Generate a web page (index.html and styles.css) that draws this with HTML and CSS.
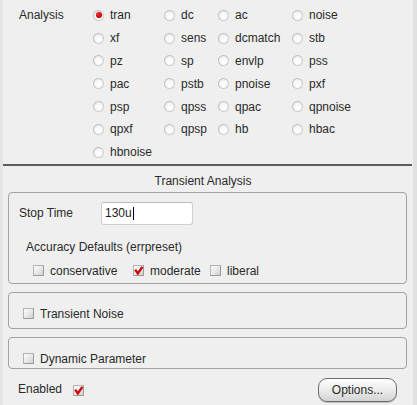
FILE: index.html
```html
<!DOCTYPE html>
<html>
<head>
<meta charset="utf-8">
<title>Analysis</title>
<link rel="stylesheet" href="styles.css">
</head>
<body>
<div class="app">
  <div class="content">
    <section class="analysis">
      <div class="analysis-label">Analysis</div>
      <div class="radio-grid">
        <div class="radio"><span class="radio-btn on"><span class="radio-dot"></span></span>tran</div>
        <div class="radio"><span class="radio-btn"></span>dc</div>
        <div class="radio"><span class="radio-btn"></span>ac</div>
        <div class="radio"><span class="radio-btn"></span>noise</div>
        <div class="radio"><span class="radio-btn"></span>xf</div>
        <div class="radio"><span class="radio-btn"></span>sens</div>
        <div class="radio"><span class="radio-btn"></span>dcmatch</div>
        <div class="radio"><span class="radio-btn"></span>stb</div>
        <div class="radio"><span class="radio-btn"></span>pz</div>
        <div class="radio"><span class="radio-btn"></span>sp</div>
        <div class="radio"><span class="radio-btn"></span>envlp</div>
        <div class="radio"><span class="radio-btn"></span>pss</div>
        <div class="radio"><span class="radio-btn"></span>pac</div>
        <div class="radio"><span class="radio-btn"></span>pstb</div>
        <div class="radio"><span class="radio-btn"></span>pnoise</div>
        <div class="radio"><span class="radio-btn"></span>pxf</div>
        <div class="radio"><span class="radio-btn"></span>psp</div>
        <div class="radio"><span class="radio-btn"></span>qpss</div>
        <div class="radio"><span class="radio-btn"></span>qpac</div>
        <div class="radio"><span class="radio-btn"></span>qpnoise</div>
        <div class="radio"><span class="radio-btn"></span>qpxf</div>
        <div class="radio"><span class="radio-btn"></span>qpsp</div>
        <div class="radio"><span class="radio-btn"></span>hb</div>
        <div class="radio"><span class="radio-btn"></span>hbac</div>
        <div class="radio"><span class="radio-btn"></span>hbnoise</div>
      </div>
    </section>

    <div class="separator"></div>

    <div class="section-title">Transient Analysis</div>

    <div class="group group-main">
      <div class="field-row">
        <span class="field-label">Stop Time</span>
        <div class="text-input">130u<span class="caret"></span></div>
      </div>
      <div class="sub-label">Accuracy Defaults (errpreset)</div>
      <div class="check-row">
        <div class="check item-cons"><span class="check-box"></span>conservative</div>
        <div class="check item-mod"><span class="check-box"><svg viewBox="0 0 11 11" width="11" height="11"><path d="M2.2 4.6 L4.8 8.4 L9.4 1.8" fill="none" stroke="#d20000" stroke-width="2.3" stroke-linejoin="miter"/></svg></span>moderate</div>
        <div class="check"><span class="check-box"></span>liberal</div>
      </div>
    </div>

    <div class="group group-noise">
      <div class="check"><span class="check-box"></span>Transient Noise</div>
    </div>

    <div class="group group-dyn">
      <div class="check"><span class="check-box"></span>Dynamic Parameter</div>
    </div>

    <div class="footer">
      <span class="enabled-label">Enabled</span>
      <span class="check-box bare"><svg viewBox="0 0 11 11" width="11" height="11"><path d="M2.2 4.6 L4.8 8.4 L9.4 1.8" fill="none" stroke="#d20000" stroke-width="2.3" stroke-linejoin="miter"/></svg></span>
      <span class="spacer"></span>
      <button class="btn" type="button">Options...</button>
    </div>
  </div>
</div>
</body>
</html>
```

FILE: styles.css
```css
* {
  box-sizing: border-box;
}

html,
body {
  margin: 0;
  padding: 0;
}

body {
  width: 417px;
  height: 405px;
  overflow: hidden;
  background: #efefef;
  font-family: "Liberation Sans", Arial, sans-serif;
  font-size: 12px;
  color: #2a2a2a;
}

.app {
  display: flex;
  height: 405px;
  border-left: 3px solid #e5e5e5;
  border-right: 4px solid #e1e1e1;
}

.content {
  flex: 1;
  margin-right: 1px;
  display: flex;
  flex-direction: column;
}

/* Analysis radio section */
.analysis {
  display: flex;
  padding-top: 4px;
}

.analysis-label {
  width: 90px;
  padding-left: 16px;
  line-height: 22.8px;
}

.radio-grid {
  display: grid;
  grid-template-columns: 71px 54px 74px auto;
  grid-auto-rows: 22.8px;
}

.radio {
  display: flex;
  align-items: center;
  gap: 6px;
  line-height: 14px;
}

.radio-btn {
  flex: none;
  width: 11px;
  height: 11px;
  border-radius: 50%;
  border: 1px solid #cdcdcd;
  border-top-color: #bdbdbd;
  border-left-color: #c2c2c2;
  background: radial-gradient(circle at 55% 62%, #ffffff 0%, #f8f8f8 45%, #dedede 100%);
  display: flex;
  align-items: center;
  justify-content: center;
}

.radio-dot {
  width: 6px;
  height: 6px;
  border-radius: 50%;
  background: radial-gradient(circle at 40% 35%, #ff3030 0%, #d00000 55%, #8a0000 100%);
}

.separator {
  height: 2px;
  background: #5c5c5c;
}

.section-title {
  margin-top: 8px;
  line-height: 14px;
  text-align: center;
  padding-right: 9px;
}

/* Group boxes */
.group {
  margin: 0 5px;
  border: 1px solid #a2a2a2;
  border-radius: 4px;
}

.group-main {
  margin-top: 4px;
  height: 92px;
  padding: 9px 0 0 9px;
}

.field-row {
  display: flex;
  align-items: center;
  height: 23px;
}

.field-label {
  width: 83px;
  padding-left: 1px;
}

.text-input {
  width: 92px;
  height: 23px;
  background: #ffffff;
  border: 1px solid #cfcfcf;
  border-top-color: #bdbdbd;
  border-radius: 3px;
  padding-left: 3px;
  display: flex;
  align-items: center;
  color: #202020;
}

.caret {
  width: 1px;
  height: 13px;
  margin-left: 1px;
  background: #000000;
}

.sub-label {
  margin-top: 15px;
  padding-left: 8px;
  line-height: 14px;
}

.check-row {
  display: flex;
  margin-top: 10px;
  padding-left: 15px;
}

.check {
  display: flex;
  align-items: center;
  gap: 6px;
  line-height: 14px;
}

.item-cons {
  width: 100px;
}

.item-mod {
  width: 77px;
}

.check-box {
  flex: none;
  width: 11px;
  height: 11px;
  border: 1px solid #b4b4b4;
  border-right-color: #9c9c9c;
  border-bottom-color: #9c9c9c;
  background: linear-gradient(135deg, #fcfcfc 0%, #ececec 45%, #cfcfcf 100%);
  position: relative;
}

.check-box svg {
  position: absolute;
  left: -1px;
  top: -1px;
}

.group-noise {
  margin-top: 8px;
  height: 37px;
  padding: 14px 0 0 14px;
}

.group-dyn {
  margin-top: 8px;
  height: 32px;
  padding: 14px 0 0 14px;
}

/* Footer */
.footer {
  display: flex;
  align-items: center;
  margin-top: 9px;
  height: 24px;
  padding-left: 15px;
  padding-right: 15px;
}

.enabled-label {
  width: 55px;
  line-height: 14px;
  margin-top: -1px;
}

.check-box.bare {
  margin-top: 2px;
}

.spacer {
  flex: 1;
}

.btn {
  width: 79px;
  height: 24px;
  border: 1px solid #6e6e6e;
  border-radius: 9px;
  background: linear-gradient(#fefefe 0%, #ececec 50%, #d3d3d3 100%);
  font-family: "Liberation Sans", Arial, sans-serif;
  font-size: 12px;
  color: #2a2a2a;
  padding: 0;
  box-shadow: 0 1px 0 #bdbdbd;
}
```
